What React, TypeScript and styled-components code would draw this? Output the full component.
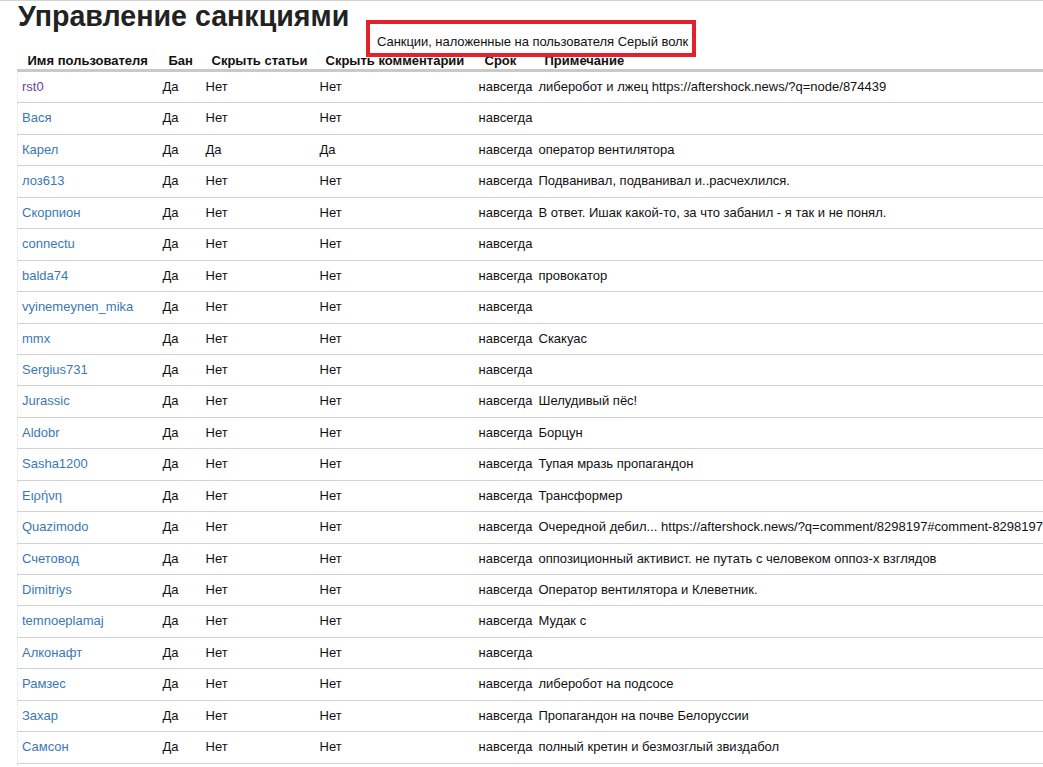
import React from "react";
import styled, { createGlobalStyle } from "styled-components";

const GlobalStyle = createGlobalStyle`
  html, body {
    margin: 0;
    padding: 0;
    background: #ffffff;
    overflow: hidden;
  }
  body {
    font-family: "Liberation Sans", Arial, sans-serif;
    font-size: 13px;
    color: #111111;
  }
`;

const Page = styled.div`
  position: relative;
  border-top: 1px solid #d2d2d2;
  padding-left: 17px;
  width: 1120px;
`;

const Title = styled.h1`
  margin: 0 0 0 1px;
  font-size: 28.6px;
  line-height: 30px;
  font-weight: bold;
  color: #222222;
`;

const Notice = styled.div`
  position: absolute;
  left: 366px;
  top: 19px;
  box-sizing: border-box;
  width: 330px;
  padding: 10px 0 4px 7px;
  border: 4px solid #e3212b;
  background: #ffffff;
  font-size: 13px;
  line-height: 15px;
  letter-spacing: -0.05px;
  color: #111111;
  z-index: 2;
`;

const Table = styled.table`
  margin-top: 20px;
  width: 1090px;
  table-layout: fixed;
  border-collapse: collapse;
  white-space: nowrap;
`;

const HeadCell = styled.th`
  text-align: left;
  font-weight: bold;
  font-size: 13px;
  line-height: 16px;
  padding: 2px 4px 0 10px;
  border-bottom: 3px solid #c9c9c9;
  color: #111111;
`;

const Row = styled.tr`
  border-bottom: 1px solid #d3d3d3;
`;

const Cell = styled.td<{ $first?: boolean }>`
  padding: 6px 4px;
  line-height: 18.43px;
  font-size: 13px;
  color: #111111;
  overflow: visible;
  border-left: ${(p) => (p.$first ? "1px dotted #e4e4e4" : "none")};
`;

const UserLink = styled.a<{ $visited?: boolean }>`
  color: ${(p) => (p.$visited ? "#6c3f96" : "#3a78b5")};
  text-decoration: none;
`;

type Sanction = {
  user: string;
  ban: string;
  hideArticles: string;
  hideComments: string;
  term: string;
  note: string;
  visited?: boolean;
};

const rows: Sanction[] = [
  { user: "rst0", ban: "Да", hideArticles: "Нет", hideComments: "Нет", term: "навсегда", note: "либеробот и лжец https://aftershock.news/?q=node/874439", visited: true },
  { user: "Вася", ban: "Да", hideArticles: "Нет", hideComments: "Нет", term: "навсегда", note: "" },
  { user: "Карел", ban: "Да", hideArticles: "Да", hideComments: "Да", term: "навсегда", note: "оператор вентилятора" },
  { user: "лоз613", ban: "Да", hideArticles: "Нет", hideComments: "Нет", term: "навсегда", note: "Подванивал, подванивал и..расчехлился." },
  { user: "Скорпион", ban: "Да", hideArticles: "Нет", hideComments: "Нет", term: "навсегда", note: "В ответ. Ишак какой-то, за что забанил - я так и не понял." },
  { user: "connectu", ban: "Да", hideArticles: "Нет", hideComments: "Нет", term: "навсегда", note: "" },
  { user: "balda74", ban: "Да", hideArticles: "Нет", hideComments: "Нет", term: "навсегда", note: "провокатор" },
  { user: "vyinemeynen_mika", ban: "Да", hideArticles: "Нет", hideComments: "Нет", term: "навсегда", note: "" },
  { user: "mmx", ban: "Да", hideArticles: "Нет", hideComments: "Нет", term: "навсегда", note: "Скакуас" },
  { user: "Sergius731", ban: "Да", hideArticles: "Нет", hideComments: "Нет", term: "навсегда", note: "" },
  { user: "Jurassic", ban: "Да", hideArticles: "Нет", hideComments: "Нет", term: "навсегда", note: "Шелудивый пёс!" },
  { user: "Aldobr", ban: "Да", hideArticles: "Нет", hideComments: "Нет", term: "навсегда", note: "Борцун" },
  { user: "Sasha1200", ban: "Да", hideArticles: "Нет", hideComments: "Нет", term: "навсегда", note: "Тупая мразь пропагандон" },
  { user: "Ειρήνη", ban: "Да", hideArticles: "Нет", hideComments: "Нет", term: "навсегда", note: "Трансформер" },
  { user: "Quazimodo", ban: "Да", hideArticles: "Нет", hideComments: "Нет", term: "навсегда", note: "Очередной дебил... https://aftershock.news/?q=comment/8298197#comment-8298197" },
  { user: "Счетовод", ban: "Да", hideArticles: "Нет", hideComments: "Нет", term: "навсегда", note: "оппозиционный активист. не путать с человеком оппоз-х взглядов" },
  { user: "Dimitriys", ban: "Да", hideArticles: "Нет", hideComments: "Нет", term: "навсегда", note: "Оператор вентилятора и Клеветник." },
  { user: "temnoeplamaj", ban: "Да", hideArticles: "Нет", hideComments: "Нет", term: "навсегда", note: "Мудак с" },
  { user: "Алконафт", ban: "Да", hideArticles: "Нет", hideComments: "Нет", term: "навсегда", note: "" },
  { user: "Рамзес", ban: "Да", hideArticles: "Нет", hideComments: "Нет", term: "навсегда", note: "либеробот на подсосе" },
  { user: "Захар", ban: "Да", hideArticles: "Нет", hideComments: "Нет", term: "навсегда", note: "Пропагандон на почве Белоруссии" },
  { user: "Самсон", ban: "Да", hideArticles: "Нет", hideComments: "Нет", term: "навсегда", note: "полный кретин и безмозглый звиздабол" },
];

const columns = [
  { title: "Имя пользователя", width: 141 },
  { title: "Бан", width: 43 },
  { title: "Скрыть статьи", width: 114 },
  { title: "Скрыть комментарии", width: 159 },
  { title: "Срок", width: 60 },
  { title: "Примечание", width: 573 },
];

export default function App() {
  return (
    <>
      <GlobalStyle />
      <Page>
        <Title>Управление санкциями</Title>
        <Notice>Санкции, наложенные на пользователя Серый волк</Notice>
        <Table>
          <colgroup>
            {columns.map((c) => (
              <col key={c.title} style={{ width: c.width }} />
            ))}
          </colgroup>
          <thead>
            <tr>
              {columns.map((c) => (
                <HeadCell key={c.title}>{c.title}</HeadCell>
              ))}
            </tr>
          </thead>
          <tbody>
            {rows.map((r) => (
              <Row key={r.user}>
                <Cell $first>
                  <UserLink href="#" $visited={r.visited}>
                    {r.user}
                  </UserLink>
                </Cell>
                <Cell>{r.ban}</Cell>
                <Cell>{r.hideArticles}</Cell>
                <Cell>{r.hideComments}</Cell>
                <Cell>{r.term}</Cell>
                <Cell>{r.note}</Cell>
              </Row>
            ))}
            <Row>
              <Cell $first>&nbsp;</Cell>
              <Cell />
              <Cell />
              <Cell />
              <Cell />
              <Cell />
            </Row>
          </tbody>
        </Table>
      </Page>
    </>
  );
}
